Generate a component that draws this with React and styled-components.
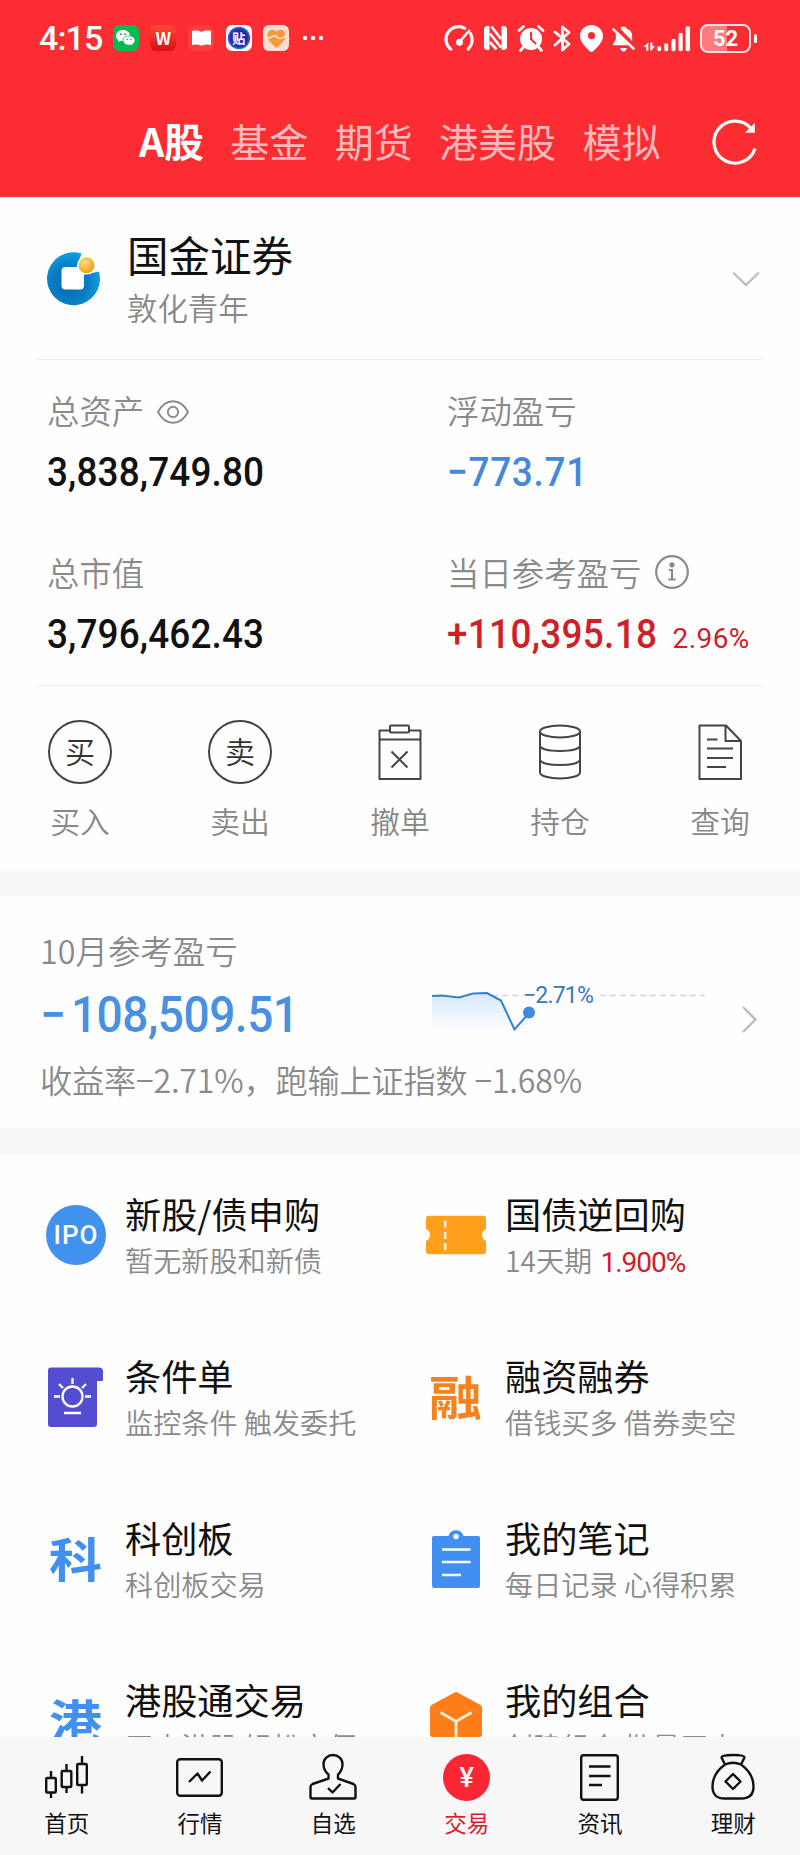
import React from "react";
import styled, { createGlobalStyle } from "styled-components";

const cjk = '"Noto Sans CJK SC", sans-serif';
const num = 'Roboto, "Noto Sans CJK SC", sans-serif';

const Global = createGlobalStyle`
  * { box-sizing: border-box; }
  html, body { margin: 0; padding: 0; background: #fff; }
  body { font-family: ${cjk}; color: #111; }
  svg { display: block; flex: none; overflow: visible; }
`;

const Screen = styled.div`
  width: 800px;
  height: 1855px;
  display: flex;
  flex-direction: column;
  overflow: hidden;
  background: #fefefe;
`;

/* ---------- header ---------- */
const Header = styled.header`
  flex: none;
  height: 197px;
  background: #fb2d32;
  color: #fff;
`;
const StatusBar = styled.div`
  height: 76px;
  padding: 0 45px 0 39px;
  display: flex;
  align-items: center;
  justify-content: space-between;
`;
const StatusGroup = styled.div`
  display: flex;
  align-items: center;
  gap: ${(p) => p.$gap}px;
`;
const Clock = styled.span`
  font: 500 34px/40px ${num};
  letter-spacing: -0.9px;
  width: 62px;
  white-space: nowrap;
`;
const AppBadge = styled.span`
  width: 26px;
  height: 26px;
  border-radius: 6px;
  background: ${(p) => p.$bg};
  color: ${(p) => p.$color || "#fff"};
  display: flex;
  align-items: center;
  justify-content: center;
  font: 700 ${(p) => p.$size || 16}px/26px ${cjk};
`;
const Battery = styled.span`
  position: relative;
  width: 51px;
  height: 29px;
  border: 2px solid #ffe3e3;
  border-radius: 8px;
  margin-right: 4px;
  background: linear-gradient(90deg, #fd7a7d 0 54%, transparent 54%);
  font: 700 22px/25px ${num};
  text-align: center;
  &::after {
    content: "";
    position: absolute;
    right: -8px;
    top: 8px;
    width: 3px;
    height: 9px;
    border-radius: 2px;
    background: #fff;
  }
`;
const Tabs = styled.nav`
  height: 121px;
  padding: 0 43px 0 139px;
  display: flex;
  align-items: center;
  gap: 26.4px;
`;
const Tab = styled.a`
  font-size: ${(p) => (p.$on ? 39.5 : 39)}px;
  line-height: 56px;
  font-weight: ${(p) => (p.$on ? 700 : 400)};
  color: ${(p) => (p.$on ? "#fff" : "#ffb9bc")};
  white-space: nowrap;
  margin-top: 6px;
`;
const RefreshSlot = styled.span`
  margin-left: auto;
  margin-top: 11px;
`;

/* ---------- account ---------- */
const Body = styled.main`
  flex: 1;
  min-height: 0;
  overflow: hidden;
`;
const Broker = styled.section`
  height: 163px;
  margin: 0 37px 0 36px;
  padding: 1px 3px 0 10px;
  display: flex;
  align-items: center;
  border-bottom: 1.5px solid #efefef;
`;
const BrokerText = styled.div`
  flex: 1;
  margin: 1px 0 0 27px;
`;
const BrokerName = styled.div`
  font-size: 41.5px;
  line-height: 56px;
  color: #111;
`;
const BrokerBranch = styled.div`
  font-size: 30.4px;
  line-height: 50px;
  font-weight: 350;
  color: #888;
`;
const Assets = styled.section`
  height: 326px;
  margin: 0 37px 0 36px;
  padding: 26px 0 0 11px;
  display: grid;
  grid-template-columns: 400px 1fr;
  grid-auto-rows: 161.5px;
  border-bottom: 1.5px solid #efefef;
`;
const Label = styled.div`
  display: flex;
  align-items: center;
  gap: ${(p) => p.$gap || 0}px;
  height: 48px;
  font-size: 32.4px;
  line-height: 48px;
  font-weight: 350;
  color: #8a8a8a;
  white-space: nowrap;
`;
const EyeSlot = styled.span`
  margin-top: 4px;
`;
const AmountRow = styled.div`
  display: flex;
  align-items: baseline;
  margin-top: 14px;
  color: ${(p) => p.$color || "#111"};
  white-space: nowrap;
`;
const Amount = styled.span`
  font: 500 41px/48px ${num};
  letter-spacing: ${(p) => p.$track || 0}px;
  transform: scaleX(0.9);
  transform-origin: 0 50%;
`;
const Rate = styled.span`
  margin-left: -8px;
  font: 400 28px/48px ${num};
  letter-spacing: 0.4px;
`;

const Actions = styled.section`
  height: 185px;
  padding-top: 34px;
  display: grid;
  grid-template-columns: repeat(5, 160px);
`;
const Action = styled.div`
  display: flex;
  flex-direction: column;
  align-items: center;
`;
const ActionIcon = styled.div`
  height: 64px;
  display: flex;
  align-items: center;
`;
const Ring = styled.div`
  width: 64px;
  height: 64px;
  border: 2px solid #444;
  border-radius: 50%;
  font-size: 30px;
  font-weight: 350;
  line-height: 57px;
  text-align: center;
  color: #333;
`;
const ActionLabel = styled.div`
  margin-top: 13px;
  font-size: 29.8px;
  line-height: 46px;
  font-weight: 350;
  color: #888;
`;
const Band = styled.div`
  height: ${(p) => p.$h}px;
  background: #f7f7f7;
`;

/* ---------- monthly ---------- */
const Month = styled.section`
  height: 232px;
  padding: 30px 42px 0 40px;
  display: grid;
  grid-template-columns: 392px 1fr 16px;
  grid-template-rows: 48px 72px 56px;
`;
const MonthAmount = styled.div`
  font: 500 50px/80px ${num};
  letter-spacing: -0.5px;
  transform: scaleX(0.92);
  transform-origin: 0 50%;
  color: #4a90e2;
  padding-top: 1px;
  white-space: nowrap;
`;
const Sign = styled.span`
  margin-right: 6px;
`;
const MonthLabel = styled(Label)`
  grid-column: 1 / 4;
`;
const MonthNote = styled.div`
  grid-column: 1 / 4;
  margin-top: 5px;
  font-size: 32.2px;
  line-height: 56px;
  letter-spacing: -0.2px;
  font-weight: 350;
  color: #8a8a8a;
  white-space: nowrap;
`;
const ChartSlot = styled.div`
  padding-top: 11px;
`;
const ArrowSlot = styled.div`
  padding-top: 32px;
`;

/* ---------- services ---------- */
const Services = styled.section`
  display: grid;
  grid-template-columns: 380px 1fr;
  grid-auto-rows: 162.1px;
  padding: 34px 0 0 36px;
`;
const Service = styled.div`
  display: grid;
  grid-template-columns: 80px 1fr;
  column-gap: 9px;
`;
const ServiceIcon = styled.div`
  height: 94px;
  display: flex;
  align-items: center;
  justify-content: center;
`;
const ServiceTitle = styled.div`
  font-size: 36.2px;
  line-height: 50px;
  color: #111;
  white-space: nowrap;
`;
const ServiceSub = styled.div`
  margin-top: 1px;
  font-size: 28.15px;
  line-height: 42px;
  font-weight: 350;
  color: #8a8a8a;
  white-space: nowrap;
`;
const Yield = styled.span`
  font-family: ${num};
  font-weight: 400;
  letter-spacing: -1.1px;
  color: #cf2027;
  margin-left: 2px;
`;
const IpoDisc = styled.div`
  width: 60px;
  height: 60px;
  border-radius: 50%;
  background: #4192ee;
  color: #fff;
  font: 500 26px/61px ${num};
  text-align: center;
  letter-spacing: 1px;
`;
const GlyphIcon = styled.div`
  font-size: 51px;
  line-height: 60px;
  font-weight: 700;
  color: ${(p) => p.$color};
  margin-top: -4px;
  transform: scale(1.04, 0.91);
`;

/* ---------- bottom bar ---------- */
const BottomBar = styled.nav`
  flex: none;
  height: 118px;
  background: #f7f7f7;
  display: grid;
  grid-template-columns: repeat(6, 1fr);
`;
const NavItem = styled.a`
  display: flex;
  flex-direction: column;
  align-items: center;
  padding-top: 15px;
  color: ${(p) => (p.$on ? "#d81e2c" : "#111")};
  font-size: 22.5px;
  line-height: 32px;
`;
const NavIcon = styled.div`
  height: 50px;
  margin-bottom: 4px;
  display: flex;
  align-items: center;
`;
const YenDisc = styled.div`
  width: 47px;
  height: 47px;
  border-radius: 50%;
  background: #fb2634;
  color: #fff;
  font: 500 27px/48px ${num};
  text-align: center;
`;

/* ---------- icon drawings ---------- */
const WeChat = () => (
  <svg width="21" height="18" viewBox="0 0 21 18" fill="#fff">
    <path d="M8 1C3.800 1 1 3.600 1 6.700c0 1.800 1 3.300 2.500 4.300L3 13l2.500-1.300c.8.200 1.600.3 2.500.3 4 0 7-2.400 7-5.400S12 1 8 1z" />
    <path d="M14 6.800c-3.400 0-6 2.100-6 4.700s2.600 4.700 6 4.700c.7 0 1.400-.1 2-.3l2 1.100-.5-1.800c1.500-.9 2.500-2.200 2.500-3.700 0-2.600-2.600-4.700-6-4.700z" stroke="#07b14f" strokeWidth=".8" />
    <g fill="#07b14f"><circle cx="5.800" cy="5.300" r="1" /><circle cx="10.200" cy="5.300" r="1" /><circle cx="12.200" cy="10.300" r=".8" /><circle cx="16" cy="10.300" r=".8" /></g>
  </svg>
);
const Book = () => (
  <svg width="21" height="18" viewBox="0 0 21 18" fill="#fff">
    <path d="M1 2q5-2 9.500 1Q15 0 20 2v14q-5-1.200-9.500 .8Q6 14.800 1 16z" />
  </svg>
);
const Heart = () => (
  <svg width="25" height="22" viewBox="0 0 25 22">
    <path d="M12.500 21C7 16.500 3.500 13 3.500 8.500 3.500 2 10 1 12.500 5 15 1 21.500 2 21.500 8.500c0 4.500-3.500 8-9 12.500z" fill="#f79a38" />
    <path d="M0 12c4-1 5-1 7-2s4-2 6 0 5 2 7 0 3-1 5 3" fill="none" stroke="#fbe3d4" strokeWidth="1.600" />
  </svg>
);
const Dots = () => (
  <svg width="21" height="6" viewBox="0 0 21 6" fill="#fff">
    <circle cx="4" cy="3" r="2.200" /><circle cx="12" cy="3" r="2.200" /><circle cx="20" cy="3" r="2.200" />
  </svg>
);
const Gauge = () => (
  <svg width="29" height="27" viewBox="0 0 30 27" fill="none" stroke="#fff" strokeWidth="3.200" strokeLinecap="round">
    <path d="M6 24.500A13 13 0 0 1 20.500 3M26.500 8.500a13 13 0 0 1-2.500 16" />
    <path d="M25 5.500L15 17" strokeWidth="2.600" /><circle cx="15" cy="17.500" r="2" fill="#fff" />
  </svg>
);
const Nfc = () => (
  <svg width="25" height="26" viewBox="0 0 25 26" fill="none" stroke="#fff">
    <path d="M6 1.500H4a2.500 2.500 0 0 0-2.500 2.500v18A2.500 2.500 0 0 0 4 24.500h2zM19 1.500H21A2.500 2.500 0 0 1 23.500 4v18a2.500 2.500 0 0 1-2.500 2.500h-2z" fill="#fff" />
    <path d="M8.500 1.500L18 14M7 8.500L18 22.500M7 17L13.500 24.500" strokeWidth="2.700" />
  </svg>
);
const Alarm = () => (
  <svg width="28" height="27" viewBox="0 0 28 27" fill="none" strokeLinecap="round">
    <circle cx="14" cy="14" r="11" fill="#fff" />
    <path d="M2 5.500L6.500 1.500M26 5.500L21.500 1.500M6 22.500L3.500 25.500M22 22.500L24.500 25.500" stroke="#fff" strokeWidth="2.800" />
    <path d="M14 7.500V14l4.500 4.500" stroke="#fb2d32" strokeWidth="2" />
  </svg>
);
const Bluetooth = () => (
  <svg width="18" height="27" viewBox="0 0 18 27" fill="none" stroke="#fff" strokeWidth="2.900" strokeLinejoin="round" strokeLinecap="round">
    <path d="M2 7l14 12-6.500 6V2L16 7.500 2 20" />
  </svg>
);
const Pin = () => (
  <svg width="23" height="27" viewBox="0 0 23 27">
    <path fillRule="evenodd" fill="#fff" d="M11.500 0C5 0 0 5 0 11c0 6.500 6 11 9.500 15 1.200 1.200 2.800 1.200 4 0C17 22 23 17.500 23 11 23 5 18 0 11.500 0zm0 7a3.600 3.600 0 1 1 0 7.200 3.600 3.600 0 0 1 0-7.200z" />
  </svg>
);
const BellOff = () => (
  <svg width="23" height="27" viewBox="0 0 24 27" fill="#fff">
    <path d="M4 8v6l-3.500 6.500h17zM9 3.500Q9 1 12 1t3 2q6 2 6 8v5z" />
    <path d="M8.500 23.500h7Q14.500 27 12 27t-3.500-3.500z" />
    <path d="M1.500 4L22.500 24" stroke="#fff" strokeWidth="2.600" strokeLinecap="round" />
  </svg>
);
const Signal = () => (
  <svg width="48" height="27" viewBox="0 0 49 27" fill="#fff">
    <path d="M3.300 26v-4H.5L5.500 17.500V26zM7.500 17.500h2.200v4h2.600L8.500 26h-1z" />
    <rect x="14.500" y="21.500" width="4" height="5" rx="1.500" /><rect x="21.700" y="18.500" width="4" height="8" rx="1.500" />
    <rect x="29" y="14" width="4.200" height="12.500" rx="1.500" /><rect x="36.300" y="8" width="4.200" height="18.500" rx="1.500" />
    <rect x="43.500" y="1" width="4.500" height="25.500" rx="1.800" />
  </svg>
);
const Refresh = () => (
  <svg width="44" height="46" viewBox="0 0 44 46">
    <path d="M42 29.500A21 21 0 1 1 37.500 9" fill="none" stroke="#fff" strokeWidth="3.200" />
    <path d="M41.800 4v9.700H31.800z" fill="#fff" />
  </svg>
);
const BrokerLogo = () => (
  <svg width="54" height="54" viewBox="0 0 54 54">
    <defs>
      <radialGradient id="ring" cx=".42" cy=".6" r=".65"><stop offset="0" stopColor="#0768ad" /><stop offset=".55" stopColor="#087dc6" /><stop offset="1" stopColor="#13a5e4" /></radialGradient>
      <radialGradient id="gold" cx=".38" cy=".32" r=".7"><stop offset="0" stopColor="#ffdf85" /><stop offset="1" stopColor="#f29c10" /></radialGradient>
    </defs>
    <path d="M35.500 1.500A26.500 26.500 0 1 0 53 19.500L38.500 22.500 30.500 15.500z" fill="url(#ring)" />
    <rect x="15.500" y="15" width="22.500" height="22.500" rx="4" fill="#fff" />
    <circle cx="40.500" cy="13.300" r="9.300" fill="#fff" />
    <circle cx="40.500" cy="13.300" r="8" fill="url(#gold)" />
  </svg>
);
const ChevronDown = () => (
  <svg width="28" height="16" viewBox="0 0 28 16" fill="none" stroke="#bbb" strokeWidth="2.200"><path d="M1 1.500l13 12.500 13-12.500" /></svg>
);
const ChevronRight = () => (
  <svg width="16" height="27" viewBox="0 0 16 27" fill="none" stroke="#bbb" strokeWidth="2.400"><path d="M1 1l12.500 12.500L1 26" /></svg>
);
const Eye = () => (
  <svg width="32" height="24" viewBox="0 0 32 24" fill="none" stroke="#8a8a8a" strokeWidth="1.900">
    <path d="M1 12C5 4.500 10 1.200 16 1.200S27 4.500 31 12c-4 7.500-9 10.800-15 10.800S5 19.500 1 12z" /><circle cx="16" cy="12" r="5.200" />
  </svg>
);
const Info = () => (
  <svg width="34" height="34" viewBox="0 0 34 34" fill="none" stroke="#8a8a8a" strokeWidth="2.200">
    <circle cx="17" cy="17" r="15.800" /><path d="M14 15h3v9M13.500 24.500h7" /><circle cx="17" cy="9.800" r="1.500" fill="#8a8a8a" />
  </svg>
);
const CancelIcon = () => (
  <svg width="44" height="56" viewBox="0 0 44 56" fill="none" stroke="#444" strokeWidth="2" strokeLinejoin="round">
    <path d="M12 6.500H1.500V55h41V6.500H31M1.500 15.500h41" /><rect x="12" y="1.500" width="19" height="7" rx="1" /><path d="M13.500 27.500l16 16M29.500 27.500l-16 16" />
  </svg>
);
const Stack = () => (
  <svg width="42" height="56" viewBox="0 0 42 56" fill="none" stroke="#444" strokeWidth="2">
    <ellipse cx="21" cy="7.500" rx="20" ry="6" /><path d="M1 7.500v41c0 3.300 9 6 20 6s20-2.700 20-6v-41M1 22c1 3 9 5 20 5s19-2 20-5M1 36c1 3 9 5 20 5s19-2 20-5" />
  </svg>
);
const Sheet = () => (
  <svg width="44" height="56" viewBox="0 0 44 56" fill="none" stroke="#444" strokeWidth="2" strokeLinejoin="round">
    <path d="M1.500 1.500H28L43 17v38H1.500zM27.500 1.500V17H43M9 15.500h10.500M9 24.500h26M9 34h26M9 43h19" />
  </svg>
);
const ChartText = styled.text`
  font: 400 23px ${num};
  letter-spacing: -0.8px;
  fill: #3578bf;
`;
const Trend = () => (
  <svg width="275" height="56" viewBox="0 0 275 56">
    <defs><linearGradient id="fade" x1="0" y1="0" x2="0" y2="1"><stop offset="0" stopColor="#d8e9fb" /><stop offset="1" stopColor="#fff" /></linearGradient></defs>
    <path d="M0 11L10 10.500l17 2 14-4 14-.5L69 15.500l13 28L96 27v23H0z" fill="url(#fade)" />
    <path d="M60 10.500h32M168 10.500h105" stroke="#d5d5d5" strokeWidth="1.500" strokeDasharray="6 4" />
    <path d="M0 11L10 10.500l17 2 14-4 14-.5L69 15.500l13.500 29L97 28" fill="none" stroke="#3980cb" strokeWidth="2" />
    <circle cx="97" cy="27.500" r="6" fill="#4189dc" />
    <ChartText x="91" y="18">−2.71%</ChartText>
  </svg>
);
const Ticket = () => (
  <svg width="61" height="40" viewBox="0 0 62 40">
    <path d="M3 .5h55a3 3 0 0 1 3 3V14a6.500 6.500 0 0 0 0 12v10.500a3 3 0 0 1-3 3H3a3 3 0 0 1-3-3V26a6.500 6.500 0 0 0 0-12V3.500a3 3 0 0 1 3-3z" fill="#fea01c" />
    <path d="M19.500 5.500v7M19.500 17v7M19.500 28.500v7" stroke="#fff5d8" strokeWidth="2.600" />
  </svg>
);
const Condition = () => (
  <svg width="56" height="60" viewBox="0 0 56 60">
    <path d="M3 .5h48a4 4 0 0 1 4 4V13q0 1-1 1h-5v43a3 3 0 0 1-3 3H3a3 3 0 0 1-3-3V3.500a3 3 0 0 1 3-3z" fill="#554dd1" />
    <g fill="none" stroke="#fff" strokeWidth="2.300"><circle cx="24.500" cy="29.500" r="10" /><path d="M24.500 11v6M6 29.500h6M37 29.500h6M11 17l4 4M38 17l-4 4M16 46h17" /></g>
  </svg>
);
const Notes = () => (
  <svg width="50" height="62" viewBox="0 0 50 62">
    <path fillRule="evenodd" d="M3 8h14.500a7.800 7.800 0 0 1 15 0H47a2 2 0 0 1 2 2v48a2 2 0 0 1-2 2H3a2 2 0 0 1-2-2V10a2 2 0 0 1 2-2zm22-2.200a2.700 2.700 0 1 0 0 5.400 2.700 2.700 0 0 0 0-5.400z" fill="#418ff0" />
    <path d="M11 21.500h28.500M11 34h28.500M11 47h19" stroke="#fff" strokeWidth="2.500" />
  </svg>
);
const Cube = () => (
  <svg width="52" height="60" viewBox="0 0 52 60">
    <path d="M24.500 1.400q1.500-.8 3 0L50.500 14q1.500 1 1.500 2.500v27q0 1.500-1.500 2.500l-23 12.600q-1.500.8-3 0L1.500 46Q0 45 0 43.500v-27Q0 15 1.500 14z" fill="#fd7e18" />
    <path d="M10.500 21.500L26 30.500 41.500 21.500M26 30v22" fill="none" stroke="#fff0dc" strokeWidth="2.800" />
  </svg>
);
const line = { fill: "none", stroke: "#111", strokeWidth: 2.4, strokeLinejoin: "round" };
const Candles = () => (
  <svg width="44" height="42" viewBox="0 0 44 42" {...line}>
    <path d="M6 15v7M6 37v5M21.500 8v7M21.500 31v6M37 0v8M37 29v8.500" /><rect x="1.200" y="22" width="9.600" height="14.500" rx="1" /><rect x="16.700" y="15" width="9.600" height="16" rx="1" /><rect x="32.200" y="8" width="9.600" height="21" rx="1" />
  </svg>
);
const Quote = () => (
  <svg width="47" height="39" viewBox="0 0 47 39" {...line}><rect x="1.200" y="1.200" width="44.600" height="36.600" rx="3" /><path d="M13 24l8.500-8.500 4.500 7L34.500 13.500" /></svg>
);
const Person = () => (
  <svg width="48" height="46" viewBox="0 0 48 46" {...line}>
    <path d="M19.500 20.500v4L3.500 30q-2 1-2 3v10q0 1.500 1.500 1.500h42q1.500 0 1.500-1.500V33q0-2-2-3L29 24.500v-4q4.500-4 4.500-10.500a9.500 9 0 0 0-19 0q0 6.500 5 10.500z" /><path d="M19 34l4.500 4.500 8-8.500" />
  </svg>
);
const News = () => (
  <svg width="39" height="47" viewBox="0 0 39 47" {...line}><rect x="1.200" y="1.200" width="36.600" height="44.600" rx="2.500" /><path d="M9 12.500h21.500M9 22h21.500M9 31h13" /></svg>
);
const Purse = () => (
  <svg width="44" height="46" viewBox="0 0 44 46" {...line}>
    <path d="M14 10.500L10.500 3.500Q10.500 1 22 1t11.500 2.500L30 10.500M14 10.500Q22 7 30 10.500q12.500 9 12.500 22 0 12-12 12h-17q-12 0-12-12 0-13 12.500-22z" /><path d="M22 20l7.500 7.500L22 35l-7.500-7.500z" />
  </svg>
);

const actions = [
  ["买入", <Ring>买</Ring>],
  ["卖出", <Ring>卖</Ring>],
  ["撤单", <CancelIcon />],
  ["持仓", <Stack />],
  ["查询", <Sheet />],
];
const services = [
  ["新股/债申购", "暂无新股和新债", <IpoDisc>IPO</IpoDisc>],
  ["国债逆回购", <>14天期 <Yield>1.900%</Yield></>, <Ticket />],
  ["条件单", "监控条件 触发委托", <Condition />],
  ["融资融券", "借钱买多 借券卖空", <GlyphIcon $color="#f5821f">融</GlyphIcon>],
  ["科创板", "科创板交易", <GlyphIcon $color="#418ff0">科</GlyphIcon>],
  ["我的笔记", "每日记录 心得积累", <Notes />],
  ["港股通交易", "买卖港股 轻松方便", <GlyphIcon $color="#418ff0">港</GlyphIcon>],
  ["我的组合", "创建组合 批量买卖", <Cube />],
];
const navItems = [
  ["首页", <Candles />],
  ["行情", <Quote />],
  ["自选", <Person />],
  ["交易", <YenDisc>¥</YenDisc>, true],
  ["资讯", <News />],
  ["理财", <Purse />],
];

export default function App() {
  return (
    <Screen lang="zh-CN">
      <Global />
      <Header>
        <StatusBar>
          <StatusGroup $gap={11.7}>
            <Clock>4:15</Clock>
            <AppBadge $bg="#07b952"><WeChat /></AppBadge>
            <AppBadge $bg="linear-gradient(#fb4a38, #d90f10)" $size={17}>W</AppBadge>
            <AppBadge $bg="#fb3d40"><Book /></AppBadge>
            <AppBadge $bg="radial-gradient(circle, #2a2a9c 0 45%, #3a5fd8 58%, #fff 64%)" $size={13}>贴</AppBadge>
            <AppBadge $bg="#f9dcd6"><Heart /></AppBadge>
            <Dots />
          </StatusGroup>
          <StatusGroup $gap={8.7}>
            <Gauge /><Nfc /><Alarm /><Bluetooth /><Pin /><BellOff /><Signal />
            <Battery>52</Battery>
          </StatusGroup>
        </StatusBar>
        <Tabs>
          <Tab $on>A股</Tab>
          <Tab>基金</Tab>
          <Tab>期货</Tab>
          <Tab>港美股</Tab>
          <Tab>模拟</Tab>
          <RefreshSlot><Refresh /></RefreshSlot>
        </Tabs>
      </Header>
      <Body>
        <Broker>
          <BrokerLogo />
          <BrokerText>
            <BrokerName>国金证券</BrokerName>
            <BrokerBranch>敦化青年</BrokerBranch>
          </BrokerText>
          <ChevronDown />
        </Broker>
        <Assets>
          <div>
            <Label $gap={13}>总资产 <EyeSlot><Eye /></EyeSlot></Label>
            <AmountRow><Amount $track={0.15}>3,838,749.80</Amount></AmountRow>
          </div>
          <div>
            <Label>浮动盈亏</Label>
            <AmountRow $color="#4589dc"><Amount $track={0.8}>−773.71</Amount></AmountRow>
          </div>
          <div>
            <Label>总市值</Label>
            <AmountRow><Amount $track={0.15}>3,796,462.43</Amount></AmountRow>
          </div>
          <div>
            <Label $gap={14}>当日参考盈亏 <Info /></Label>
            <AmountRow $color="#cf2027">
              <Amount $track={0.35}>+110,395.18</Amount>
              <Rate>2.96%</Rate>
            </AmountRow>
          </div>
        </Assets>
        <Actions>
          {actions.map(([label, icon]) => (
            <Action key={label}>
              <ActionIcon>{icon}</ActionIcon>
              <ActionLabel>{label}</ActionLabel>
            </Action>
          ))}
        </Actions>
        <Band $h={25} />
        <Month>
          <MonthLabel>10月参考盈亏</MonthLabel>
          <MonthAmount><Sign>−</Sign>108,509.51</MonthAmount>
          <ChartSlot><Trend /></ChartSlot>
          <ArrowSlot><ChevronRight /></ArrowSlot>
          <MonthNote>收益率−2.71%，跑输上证指数 −1.68%</MonthNote>
        </Month>
        <Band $h={26} />
        <Services>
          {services.map(([title, sub, icon]) => (
            <Service key={title}>
              <ServiceIcon>{icon}</ServiceIcon>
              <div>
                <ServiceTitle>{title}</ServiceTitle>
                <ServiceSub>{sub}</ServiceSub>
              </div>
            </Service>
          ))}
        </Services>
      </Body>
      <BottomBar>
        {navItems.map(([label, icon, on]) => (
          <NavItem key={label} $on={on}>
            <NavIcon>{icon}</NavIcon>
            {label}
          </NavItem>
        ))}
      </BottomBar>
    </Screen>
  );
}
